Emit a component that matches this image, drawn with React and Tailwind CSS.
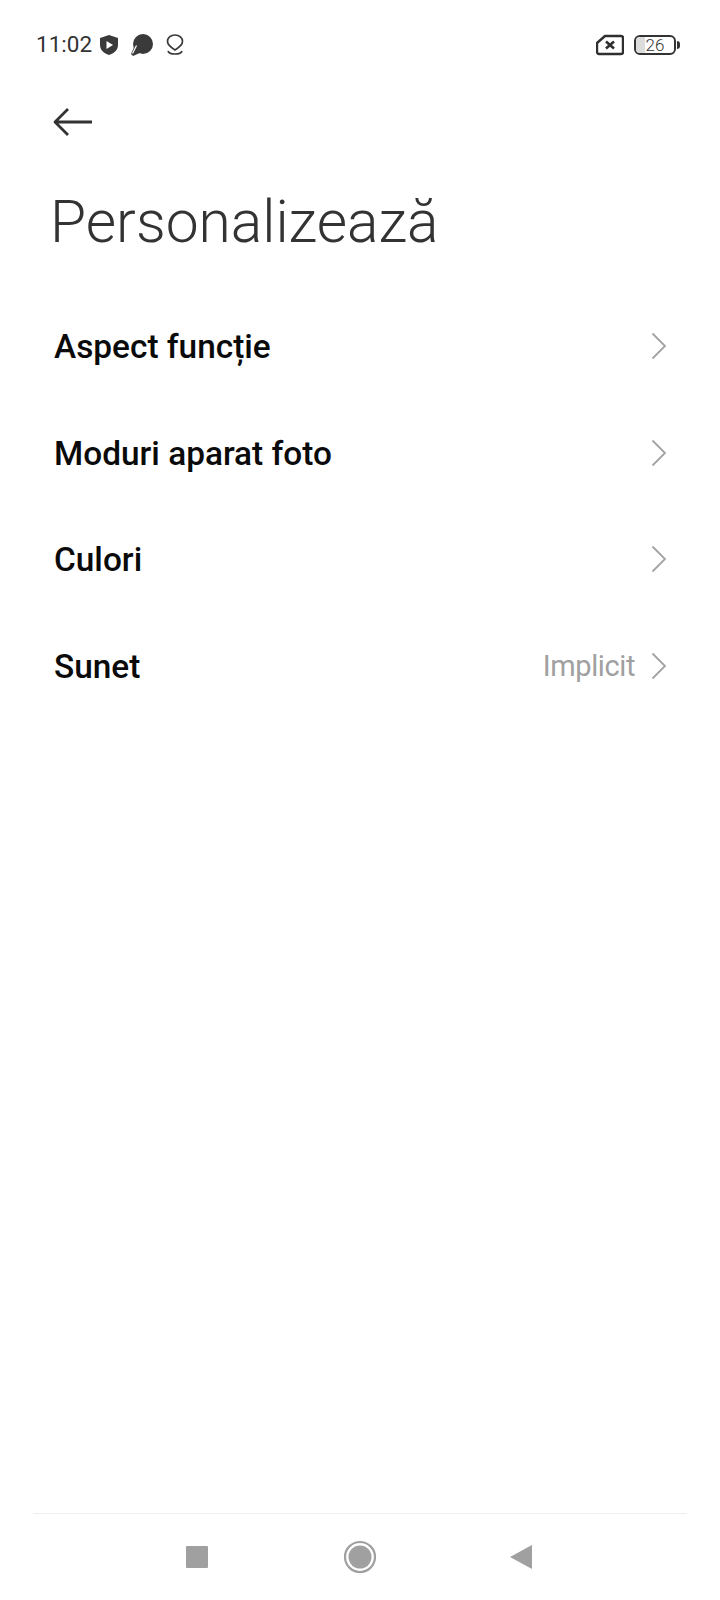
const font = { fontFamily: 'Roboto, sans-serif' };

function Chevron() {
  return (
    <svg width="16" height="28" viewBox="0 0 16 28" fill="none" className="mb-[2px] shrink-0">
      <path d="M1.5 1.5 L14 14 L1.5 26.5" stroke="#a3a3a3" strokeWidth="1.8" />
    </svg>
  );
}

function Row({ label, value }) {
  return (
    <div className="flex h-[106.5px] items-center justify-between pl-[54px] pr-[53px]">
      <span className="text-[33.4px] font-medium text-[#0a0a0a]">{label}</span>
      <div className="flex items-center gap-[16px]">
        {value && <span className="text-[29px] font-normal tracking-[-0.4px] text-[#a0a0a0]">{value}</span>}
        <Chevron />
      </div>
    </div>
  );
}

export default function App() {
  return (
    <div className="flex h-[1600px] w-[720px] flex-col bg-white" style={font}>
      <div className="flex h-[90px] items-center justify-between pl-[36px] pr-[40px]">
        <div className="flex items-center">
          <span className="text-[22.5px] text-[#333333]">11:02</span>
          <svg width="20" height="22" viewBox="0 0 20 22" className="ml-[7px]">
            <path d="M10 1 L19 4 V11 C19 16 15 19.5 10 21 C5 19.5 1 16 1 11 V4 Z" fill="#3a3a3a" />
            <path d="M7.5 7 L14 11 L7.5 15 Z" fill="#fff" />
          </svg>
          <svg width="24" height="22" viewBox="0 0 24 22" className="ml-[11px]">
            <circle cx="13" cy="10" r="10" fill="#3a3a3a" />
            <path d="M5 11 L1 20 L3 22 L12 18 Z" fill="#3a3a3a" />
            <path d="M2.5 19.5 L6.5 11.5" stroke="#fff" strokeWidth="1.2" />
          </svg>
          <svg width="20" height="24" viewBox="0 0 20 24" fill="none" className="ml-[11px]">
            <path d="M10 2 C14.5 2 17.5 5 17.5 8.5 C17.5 12 14 14.5 10 17 C6 14.5 2.5 12 2.5 8.5 C2.5 5 5.5 2 10 2 Z" stroke="#3a3a3a" strokeWidth="1.7" />
            <path d="M3 18 C4 22 16 22 17 18" stroke="#3a3a3a" strokeWidth="1.7" />
          </svg>
        </div>
        <div className="flex items-center gap-[10px]">
          <svg width="28" height="22" viewBox="0 0 28 22" fill="none">
            <path d="M9 2 H25 C26 2 27 3 27 4 V18 C27 19 26 20 25 20 H3 C2 20 1 19 1 18 V9 Z" stroke="#2f2f2f" strokeWidth="2.4" strokeLinejoin="round" />
            <path d="M10 7.5 L18 14.5 M18 7.5 L10 14.5" stroke="#2f2f2f" strokeWidth="2.6" />
          </svg>
          <div className="flex items-center gap-[1px]">
            <div className="relative flex h-[20px] w-[42px] items-center justify-center overflow-hidden rounded-[6px] border-2 border-[#333333]">
              <div className="absolute inset-y-0 left-0 w-[9px] bg-[#dcdcdc]" />
              <span className="relative text-[17px] font-light leading-none text-[#333333]">26</span>
            </div>
            <div className="h-[8px] w-[3px] rounded-r-sm bg-[#333333]" />
          </div>
        </div>
      </div>

      <div className="pl-[53px] pt-[17px]">
        <svg width="40" height="30" viewBox="0 0 40 30" fill="none" className="block">
          <path d="M39 15 H2 M15 2 L2 15 L15 28" stroke="#333333" strokeWidth="2.8" strokeLinejoin="round" />
        </svg>
      </div>

      <h1 className="mt-[49px] pl-[50px] text-[58.7px] font-light leading-[72px] text-[#333333]">Personalizează</h1>

      <div className="mt-[36px]">
        <Row label="Aspect funcție" />
        <Row label="Moduri aparat foto" />
        <Row label="Culori" />
        <Row label="Sunet" value="Implicit" />
      </div>

      <div className="mx-[33px] mt-auto border-t border-[#eeeeee]">
        <div className="flex h-[86px] items-start justify-between pb-0 pl-[153px] pr-[155px] pt-[30px]">
          <div className="mt-[2px] h-[22px] w-[22px] rounded-[1px] bg-[#a0a0a0]" />
          <svg width="34" height="34" viewBox="0 0 34 34" className="-mt-[4px] ml-[2px]">
            <circle cx="17" cy="17" r="15" fill="none" stroke="#a0a0a0" strokeWidth="2.2" />
            <circle cx="17" cy="17" r="11.5" fill="#a0a0a0" />
          </svg>
          <svg width="22" height="24" viewBox="0 0 22 24" className="mt-[1px]">
            <path d="M22 0 V24 L0 12 Z" fill="#a0a0a0" />
          </svg>
        </div>
      </div>
    </div>
  );
}
